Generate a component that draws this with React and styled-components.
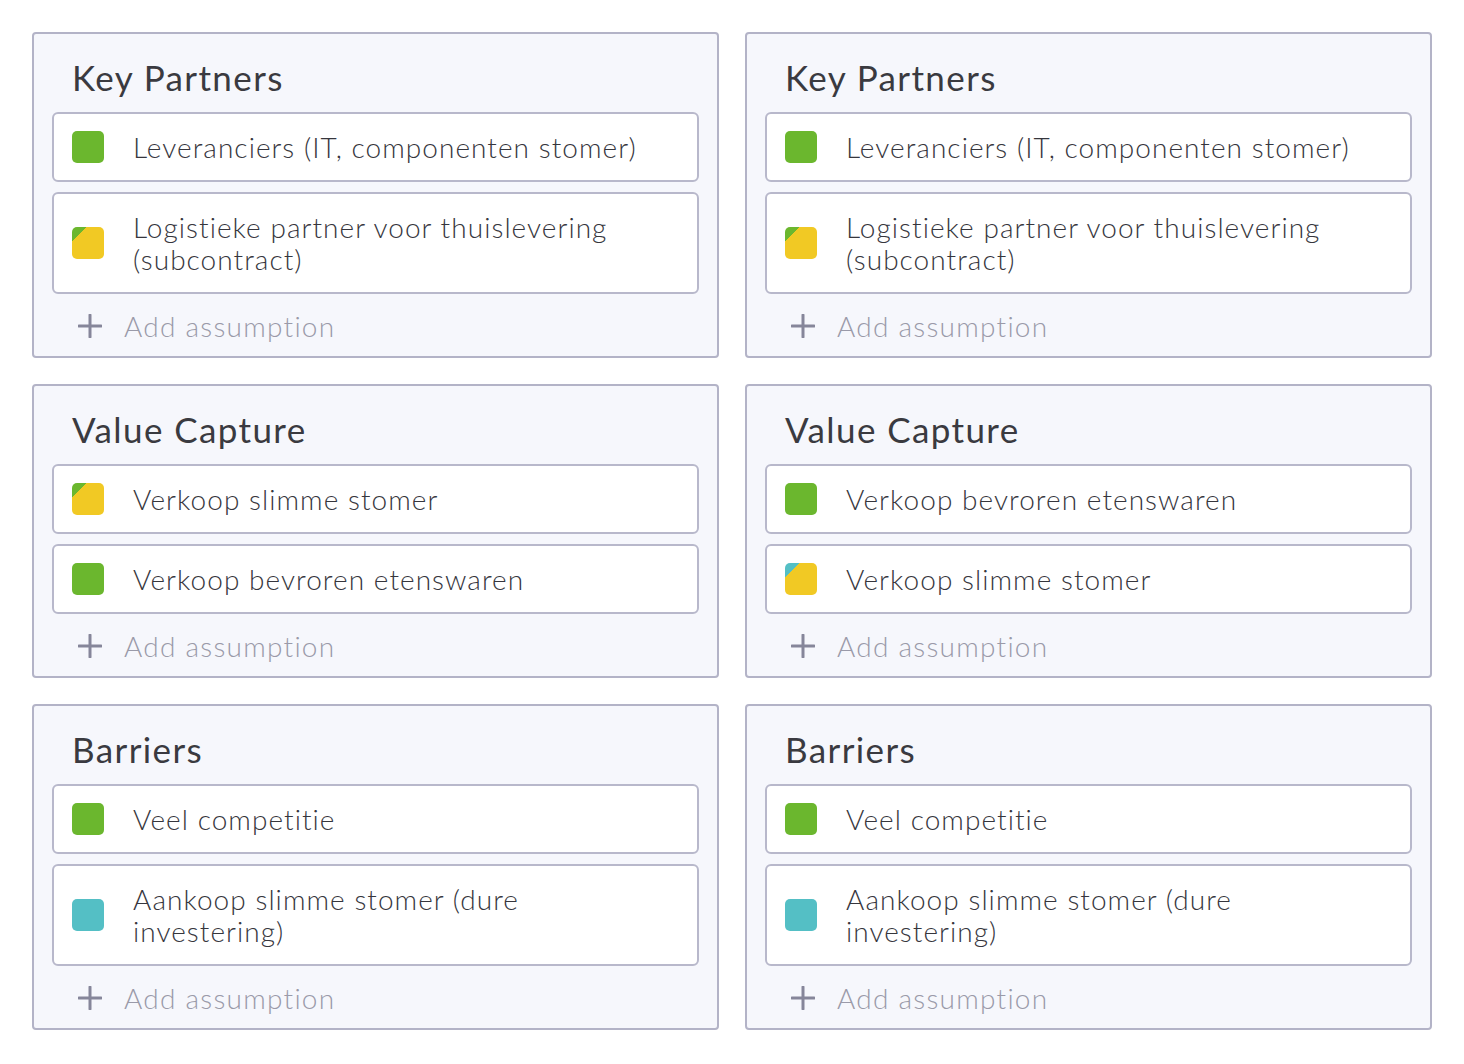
import React from "react";
import styled, { createGlobalStyle } from "styled-components";

const Global = createGlobalStyle`
  * { box-sizing: border-box; }
  html, body { margin: 0; padding: 0; background: #ffffff; }
  body { font-family: Lato, "Open Sans", sans-serif; color: #3b3b42; }
`;

const Page = styled.div`
  padding: 32px;
  display: grid;
  grid-template-columns: 1fr 1fr;
  gap: 26px;
  width: 1464px;
`;

const Panel = styled.section`
  background: #f6f7fc;
  border: 2px solid #b3b3c7;
  border-radius: 4px;
  padding: 18px 18px 8px;
  display: flex;
  flex-direction: column;
`;

const Title = styled.h2`
  margin: 0 0 10px 20px;
  font-weight: 400;
  font-size: 35px;
  letter-spacing: 1.4px;
  line-height: 50px;
  color: #3a3a40;
`;

const List = styled.div`
  display: flex;
  flex-direction: column;
  gap: 10px;
`;

const Card = styled.div`
  background: #ffffff;
  border: 2px solid #b8b8cb;
  border-radius: 6px;
  padding: 17px 18px;
  min-height: 70px;
  display: flex;
  align-items: center;
  gap: 29px;
`;

const colors = {
  green: "#6bb72e",
  yellow: "#f1c924",
  teal: "#54bfc5",
};

const Swatch = styled.span`
  flex: none;
  width: 32px;
  height: 32px;
  border-radius: 5px;
  background: ${(p) =>
    p.$corner
      ? `linear-gradient(135deg, ${colors[p.$corner]} 0 23%, ${colors[p.$color]} 23%)`
      : colors[p.$color]};
`;

const TextBox = styled.div`
  max-width: 525px;
`;

const Text = styled.span`
  font-size: 28px;
  font-weight: 300;
  letter-spacing: 1.05px;
  line-height: 32px;
  color: #36363d;
`;

const AddRow = styled.div`
  margin-top: 10px;
  height: 44px;
  display: flex;
  align-items: center;
  gap: 22px;
  padding-left: 26px;
  font-size: 28px;
  font-weight: 300;
  letter-spacing: 1.25px;
  color: #9a9aa9;
`;

const PlusIcon = () => (
  <svg width="24" height="24" viewBox="0 0 24 24" style={{ flex: "none" }}>
    <path d="M12 1v22M1 12h22" stroke="#86869a" strokeWidth="3" strokeLinecap="round" />
  </svg>
);

const data = [
  {
    title: "Key Partners",
    items: [
      { c: "green", t: "Leveranciers (IT, componenten stomer)" },
      { c: "yellow", k: "green", t: "Logistieke partner voor thuislevering (subcontract)" },
    ],
  },
  {
    title: "Key Partners",
    items: [
      { c: "green", t: "Leveranciers (IT, componenten stomer)" },
      { c: "yellow", k: "green", t: "Logistieke partner voor thuislevering (subcontract)" },
    ],
  },
  {
    title: "Value Capture",
    items: [
      { c: "yellow", k: "green", t: "Verkoop slimme stomer" },
      { c: "green", t: "Verkoop bevroren etenswaren" },
    ],
  },
  {
    title: "Value Capture",
    items: [
      { c: "green", t: "Verkoop bevroren etenswaren" },
      { c: "yellow", k: "teal", t: "Verkoop slimme stomer" },
    ],
  },
  {
    title: "Barriers",
    items: [
      { c: "green", t: "Veel competitie" },
      { c: "teal", t: "Aankoop slimme stomer (dure investering)" },
    ],
  },
  {
    title: "Barriers",
    items: [
      { c: "green", t: "Veel competitie" },
      { c: "teal", t: "Aankoop slimme stomer (dure investering)" },
    ],
  },
];

export default function App() {
  return (
    <>
      <Global />
      <Page>
        {data.map((p, i) => (
          <Panel key={i}>
            <Title>{p.title}</Title>
            <List>
              {p.items.map((it, j) => (
                <Card key={j}>
                  <Swatch $color={it.c} $corner={it.k} />
                  <TextBox>
                    <Text>{it.t}</Text>
                  </TextBox>
                </Card>
              ))}
            </List>
            <AddRow>
              <PlusIcon />
              <span>Add assumption</span>
            </AddRow>
          </Panel>
        ))}
      </Page>
    </>
  );
}
